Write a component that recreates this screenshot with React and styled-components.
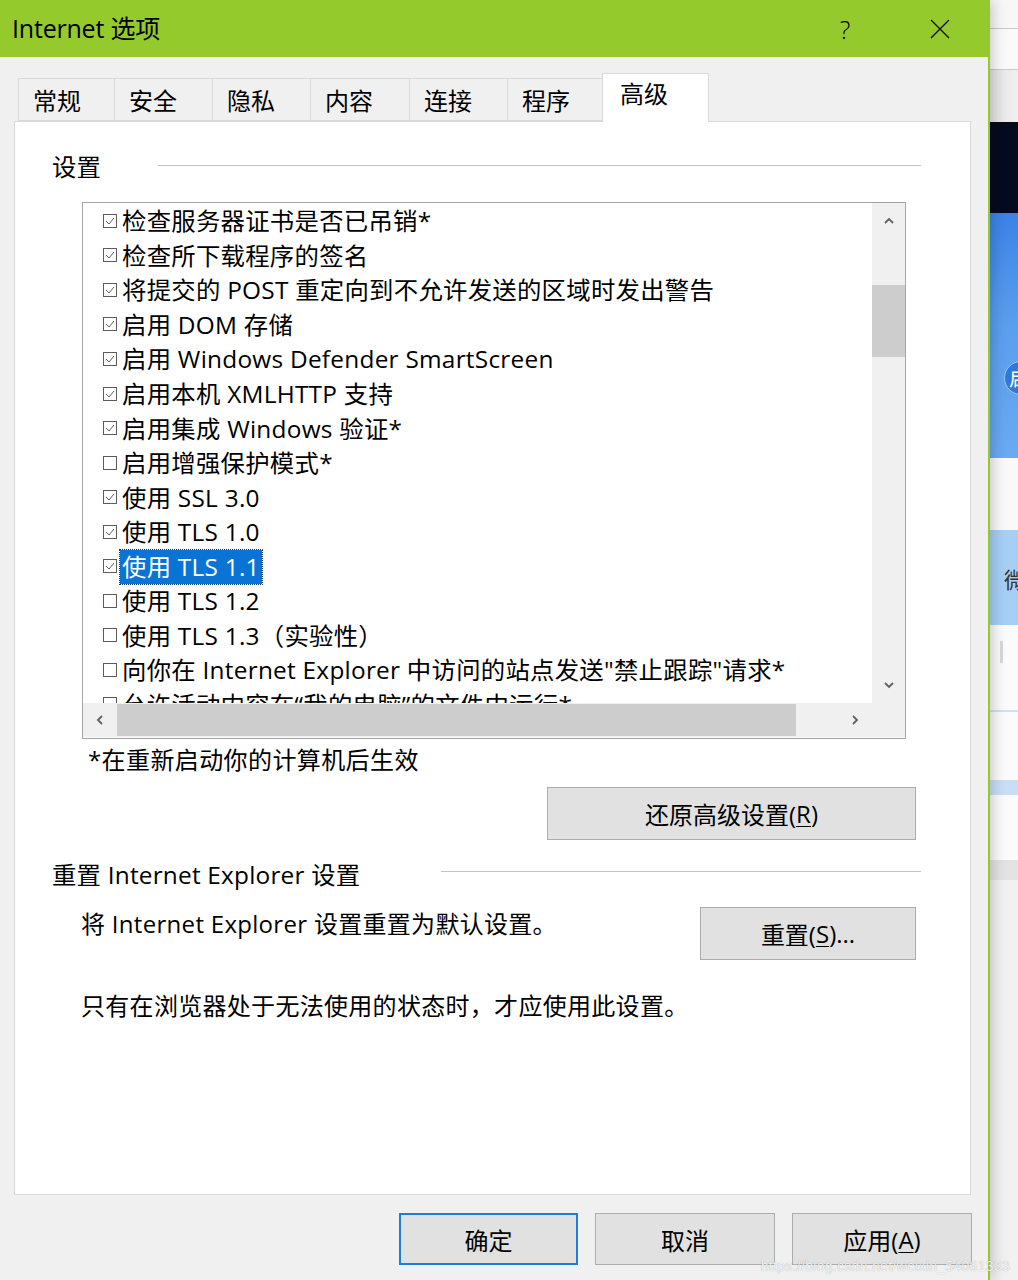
import styled, { createGlobalStyle } from 'styled-components';

const GlobalStyle = createGlobalStyle`
  html, body {
    margin: 0;
    padding: 0;
    width: 1018px;
    height: 1280px;
    overflow: hidden;
    background: #f2f2f2;
  }
  body {
    font-family: "Open Sans", "Noto Sans CJK SC", sans-serif;
    color: #000;
  }
`;

const tabs = [
  { label: '常规', w: 97 },
  { label: '安全', w: 98 },
  { label: '隐私', w: 98 },
  { label: '内容', w: 99 },
  { label: '连接', w: 98 },
  { label: '程序', w: 95 },
  { label: '高级', w: 107, active: true },
];

const options = [
  { checked: true, label: '检查服务器证书是否已吊销*' },
  { checked: true, label: '检查所下载程序的签名' },
  { checked: true, label: '将提交的 POST 重定向到不允许发送的区域时发出警告' },
  { checked: true, label: '启用 DOM 存储' },
  { checked: true, label: '启用 Windows Defender SmartScreen' },
  { checked: true, label: '启用本机 XMLHTTP 支持' },
  { checked: true, label: '启用集成 Windows 验证*' },
  { checked: false, label: '启用增强保护模式*' },
  { checked: true, label: '使用 SSL 3.0' },
  { checked: true, label: '使用 TLS 1.0' },
  { checked: true, label: '使用 TLS 1.1', selected: true },
  { checked: false, label: '使用 TLS 1.2' },
  { checked: false, label: '使用 TLS 1.3（实验性）' },
  { checked: false, label: '向你在 Internet Explorer 中访问的站点发送"禁止跟踪"请求*' },
  { checked: false, label: '允许活动内容在“我的电脑”的文件中运行*' },
];

// the window behind the dialog, top to bottom
const bands = [
  { h: 28, bg: '#f7f7f7' },
  { h: 1, bg: '#c9c9c9' },
  { h: 40, bg: '#fafafa' },
  { h: 1, bg: '#c9c9c9' },
  { h: 52, bg: 'linear-gradient(90deg, #e2e2e2, #fafafa)' },
  { h: 91, bg: '#050b1e' },
  { h: 245, bg: 'linear-gradient(180deg, #3b82e6, #5a9eee 45%, #6aaaf2)', badge: '启' },
  { h: 72, bg: '#f9f9f9' },
  { h: 95, bg: '#a6cff6', char: '微' },
  { h: 85, bg: '#fbfbfb', bar: true },
  { h: 2, bg: '#cde2f7' },
  { h: 68, bg: '#fbfbfb' },
  { h: 15, bg: '#c9def6' },
  { h: 65, bg: '#fbfbfb' },
  { h: 20, bg: '#e3e3e3' },
];

const Check = ({ checked }) => (
  <svg width="15" height="15" viewBox="0 0 15 15">
    <rect x="0.5" y="0.5" width="13" height="13" fill="#fff" stroke="#5c5c5c" />
    {checked && <polyline points="3,7 6,10 11,4" fill="none" stroke="#5c5c5c" strokeWidth="1" />}
  </svg>
);

const Chevron = ({ dir }) => {
  const pts = {
    up: '1,7 5,3 9,7',
    down: '1,3 5,7 9,3',
    left: '7,1 3,5 7,9',
    right: '3,1 7,5 3,9',
  };
  return (
    <svg width="10" height="10" viewBox="0 0 10 10">
      <polyline points={pts[dir]} fill="none" stroke="#606060" strokeWidth="1.8" />
    </svg>
  );
};

export default function App() {
  return (
    <Screen>
      <GlobalStyle />
      <Dialog>
        <TitleBar>
          <Title>Internet 选项</Title>
          <TitleButton $w={94}>?</TitleButton>
          <TitleButton $w={96}>
            <svg width="20" height="20" viewBox="0 0 20 20">
              <path d="M1 1 L19 19 M19 1 L1 19" stroke="#111" strokeWidth="1.4" />
            </svg>
          </TitleButton>
        </TitleBar>

        <TabStrip>
          {tabs.map((t, i) => (
            <Tab key={t.label} $w={t.w} $first={i === 0} $active={t.active}>{t.label}</Tab>
          ))}
        </TabStrip>

        <Panel>
          <GroupHeading>
            <HeadingLabel $w={106}>设置</HeadingLabel>
            <Rule />
          </GroupHeading>

          <ListBox>
            <ListViewport>
              {options.map((o) => (
                <OptionRow key={o.label}>
                  <Check checked={o.checked} />
                  <OptionText $selected={o.selected}>{o.label}</OptionText>
                </OptionRow>
              ))}
            </ListViewport>
            <VScroll>
              <ArrowCell><Chevron dir="up" /></ArrowCell>
              <VTrack>
                <VThumb />
              </VTrack>
              <ArrowCell><Chevron dir="down" /></ArrowCell>
            </VScroll>
            <HScroll>
              <ArrowCell $h><Chevron dir="left" /></ArrowCell>
              <HTrack>
                <HThumb />
              </HTrack>
              <ArrowCell $h><Chevron dir="right" /></ArrowCell>
            </HScroll>
            <Corner />
          </ListBox>

          <Note>*在重新启动你的计算机后生效</Note>

          <ButtonRow>
            <Button $w={369} $h={53}>还原高级设置(<u>R</u>)</Button>
          </ButtonRow>

          <GroupHeading $top={18}>
            <HeadingLabel $w={389}>重置 Internet Explorer 设置</HeadingLabel>
            <Rule $lift={8} />
          </GroupHeading>

          <ResetRow>
            <BodyText>将 Internet Explorer 设置重置为默认设置。</BodyText>
            <Button $w={216} $h={53}>重置(<u>S</u>)...</Button>
          </ResetRow>

          <BodyText $top={29}>只有在浏览器处于无法使用的状态时，才应使用此设置。</BodyText>
        </Panel>

        <Footer>
          <Button $w={179} $h={52} $default>确定</Button>
          <Button $w={180} $h={52}>取消</Button>
          <Button $w={180} $h={52}>应用(<u>A</u>)</Button>
        </Footer>
      </Dialog>

      <Backdrop>
        {bands.map((b, i) => (
          <Band key={i} $h={b.h} $bg={b.bg}>
            {b.badge && <Badge>{b.badge}</Badge>}
            {b.char && <BandChar>{b.char}</BandChar>}
            {b.bar && <BandBar />}
          </Band>
        ))}
        <Band $fill $bg="#f1f1f1" />
      </Backdrop>

      <Watermark>https://blog.csdn.net/weixin_54061333</Watermark>
    </Screen>
  );
}

const Screen = styled.div`
  position: relative;
  display: flex;
  width: 1018px;
  height: 1280px;
  overflow: hidden;
`;

const Dialog = styled.div`
  position: relative;
  z-index: 1;
  display: flex;
  flex-direction: column;
  width: 988px;
  flex: none;
  height: 1280px;
  background: #f0f0f0;
  border-right: 2px solid #93c832;
  box-shadow: 2px 0 14px rgba(0, 0, 0, 0.22);
`;

const TitleBar = styled.div`
  display: flex;
  align-items: center;
  height: 57px;
  background: #94ca2b;
  padding-left: 12px;
`;

const Title = styled.div`
  flex: 1;
  font-size: 25px;
  line-height: 57px;
  letter-spacing: -0.2px;
`;

const TitleButton = styled.div`
  display: flex;
  align-items: center;
  justify-content: center;
  width: ${(p) => p.$w}px;
  height: 57px;
  font-size: 25px;
  font-weight: 300;
`;

const TabStrip = styled.div`
  display: flex;
  align-items: flex-end;
  height: 48px;
  margin-top: 16px;
  padding-left: 18px;
  position: relative;
  z-index: 2;
`;

const Tab = styled.div`
  box-sizing: border-box;
  flex: none;
  width: ${(p) => p.$w}px;
  height: ${(p) => (p.$active ? 49 : 43)}px;
  margin-bottom: ${(p) => (p.$active ? -1 : 0)}px;
  padding: ${(p) => (p.$active ? '2px 0 0 17px' : '4px 0 0 14px')};
  background: ${(p) => (p.$active ? '#fff' : '#f0f0f0')};
  border-top: 1px solid #d9d9d9;
  border-right: 1px solid #d9d9d9;
  border-left: ${(p) => (p.$first || p.$active ? '1px solid #d9d9d9' : 'none')};
  border-bottom: ${(p) => (p.$active ? 'none' : '1px solid #d9d9d9')};
  margin-left: ${(p) => (p.$active ? -1 : 0)}px;
  font-size: 24px;
  line-height: 36px;
`;

const Panel = styled.div`
  box-sizing: border-box;
  display: flex;
  flex-direction: column;
  height: 1074px;
  margin: 0 17px 0 14px;
  padding-top: 28px;
  background: #fff;
  border: 1px solid #d9d9d9;
`;

const GroupHeading = styled.div`
  display: flex;
  align-items: center;
  height: 34px;
  margin: ${(p) => p.$top || 0}px 49px 0 37px;
`;

const HeadingLabel = styled.div`
  width: ${(p) => p.$w}px;
  flex: none;
  font-size: 24.4px;
  letter-spacing: 0.2px;
  line-height: 34px;
  white-space: nowrap;
`;

const Rule = styled.div`
  flex: 1;
  height: 1px;
  margin-top: -${(p) => p.$lift || 3}px;
  background: #c4c4c4;
`;

const ListBox = styled.div`
  box-sizing: border-box;
  display: grid;
  grid-template-columns: 1fr 33px;
  grid-template-rows: 500px 34px;
  width: 824px;
  height: 537px;
  margin: 18px 0 0 67px;
  border: 1px solid #a5a5a5;
`;

const ListViewport = styled.div`
  overflow: hidden;
  padding-top: 1px;
`;

const OptionRow = styled.div`
  display: flex;
  align-items: center;
  gap: 2px;
  height: 34.55px;
  padding-left: 20px;
  white-space: nowrap;
`;

const OptionText = styled.span`
  font-size: 24.4px;
  letter-spacing: 0.25px;
  line-height: 34px;
  padding: 0 2px;
  background: ${(p) => (p.$selected ? '#0a74d6' : 'transparent')};
  color: ${(p) => (p.$selected ? '#fff' : '#000')};
  outline: ${(p) => (p.$selected ? '1px dotted #0b3c7a' : 'none')};
`;

const VScroll = styled.div`
  display: flex;
  flex-direction: column;
  background: #f0f0f0;
`;

const HScroll = styled.div`
  display: flex;
  background: #f0f0f0;
`;

const ArrowCell = styled.div`
  display: flex;
  align-items: center;
  justify-content: center;
  flex: none;
  width: ${(p) => (p.$h ? 34 : 33)}px;
  height: ${(p) => (p.$h ? 34 : 36)}px;
`;

const VTrack = styled.div`
  flex: 1;
  padding-top: 46px;
`;

const VThumb = styled.div`
  height: 72px;
  background: #cdcdcd;
`;

const HTrack = styled.div`
  flex: 1;
  display: flex;
  padding: 1px 42px 1px 0;
`;

const HThumb = styled.div`
  flex: 1;
  background: #cdcdcd;
`;

const Corner = styled.div`
  background: #f0f0f0;
`;

const Note = styled.div`
  margin: 4px 0 0 73px;
  font-size: 24px;
  line-height: 34px;
  letter-spacing: 0.4px;
  white-space: nowrap;
`;

const ButtonRow = styled.div`
  display: flex;
  justify-content: flex-end;
  margin: 10px 54px 0 0;
`;

const Button = styled.div`
  box-sizing: border-box;
  display: flex;
  align-items: center;
  justify-content: center;
  width: ${(p) => p.$w}px;
  height: ${(p) => p.$h}px;
  background: #e1e1e1;
  border: ${(p) => (p.$default ? '2px solid #1a7fd8' : '1px solid #adadad')};
  font-size: 24px;
  white-space: nowrap;

  u {
    text-decoration-thickness: 1px;
    text-underline-offset: 3px;
  }
`;

const ResetRow = styled.div`
  display: flex;
  justify-content: space-between;
  align-items: flex-start;
  margin: 15px 54px 0 0;
`;

const BodyText = styled.div`
  margin: ${(p) => p.$top || 0}px 0 0 66px;
  font-size: 24px;
  letter-spacing: 0.3px;
  line-height: 34px;
  white-space: nowrap;
`;

const Footer = styled.div`
  display: flex;
  justify-content: flex-end;
  gap: 17px;
  margin-top: 18px;
  padding-right: 16px;
`;

const Backdrop = styled.div`
  display: flex;
  flex-direction: column;
  flex: 1;
  height: 1280px;
`;

const Band = styled.div`
  display: flex;
  align-items: center;
  flex: ${(p) => (p.$fill ? 1 : 'none')};
  height: ${(p) => (p.$fill ? 'auto' : `${p.$h}px`)};
  background: ${(p) => p.$bg};
  overflow: hidden;
`;

const Badge = styled.div`
  flex: none;
  align-self: flex-start;
  width: 32px;
  height: 32px;
  margin: 148px 0 0 14px;
  border-radius: 50%;
  background: #2f79dc;
  border: 1px solid #9cc6f5;
  color: #fff;
  font-size: 20px;
  line-height: 32px;
  text-indent: 4px;
  font-family: "Noto Sans CJK SC", sans-serif;
`;

const BandChar = styled.div`
  margin-left: 14px;
  font-size: 22px;
  color: #333;
  font-family: "Noto Sans CJK SC", sans-serif;
`;

const BandBar = styled.div`
  width: 3px;
  height: 22px;
  margin: -32px 0 0 10px;
  background: #d8d8d8;
`;

const Watermark = styled.div`
  position: absolute;
  right: 8px;
  bottom: 6px;
  z-index: 3;
  font-family: "Liberation Sans", sans-serif;
  font-size: 14px;
  color: rgba(255, 255, 255, 0.85);
  text-shadow: 0 0 1px rgba(0, 0, 0, 0.35);
  letter-spacing: 0.3px;
`;
